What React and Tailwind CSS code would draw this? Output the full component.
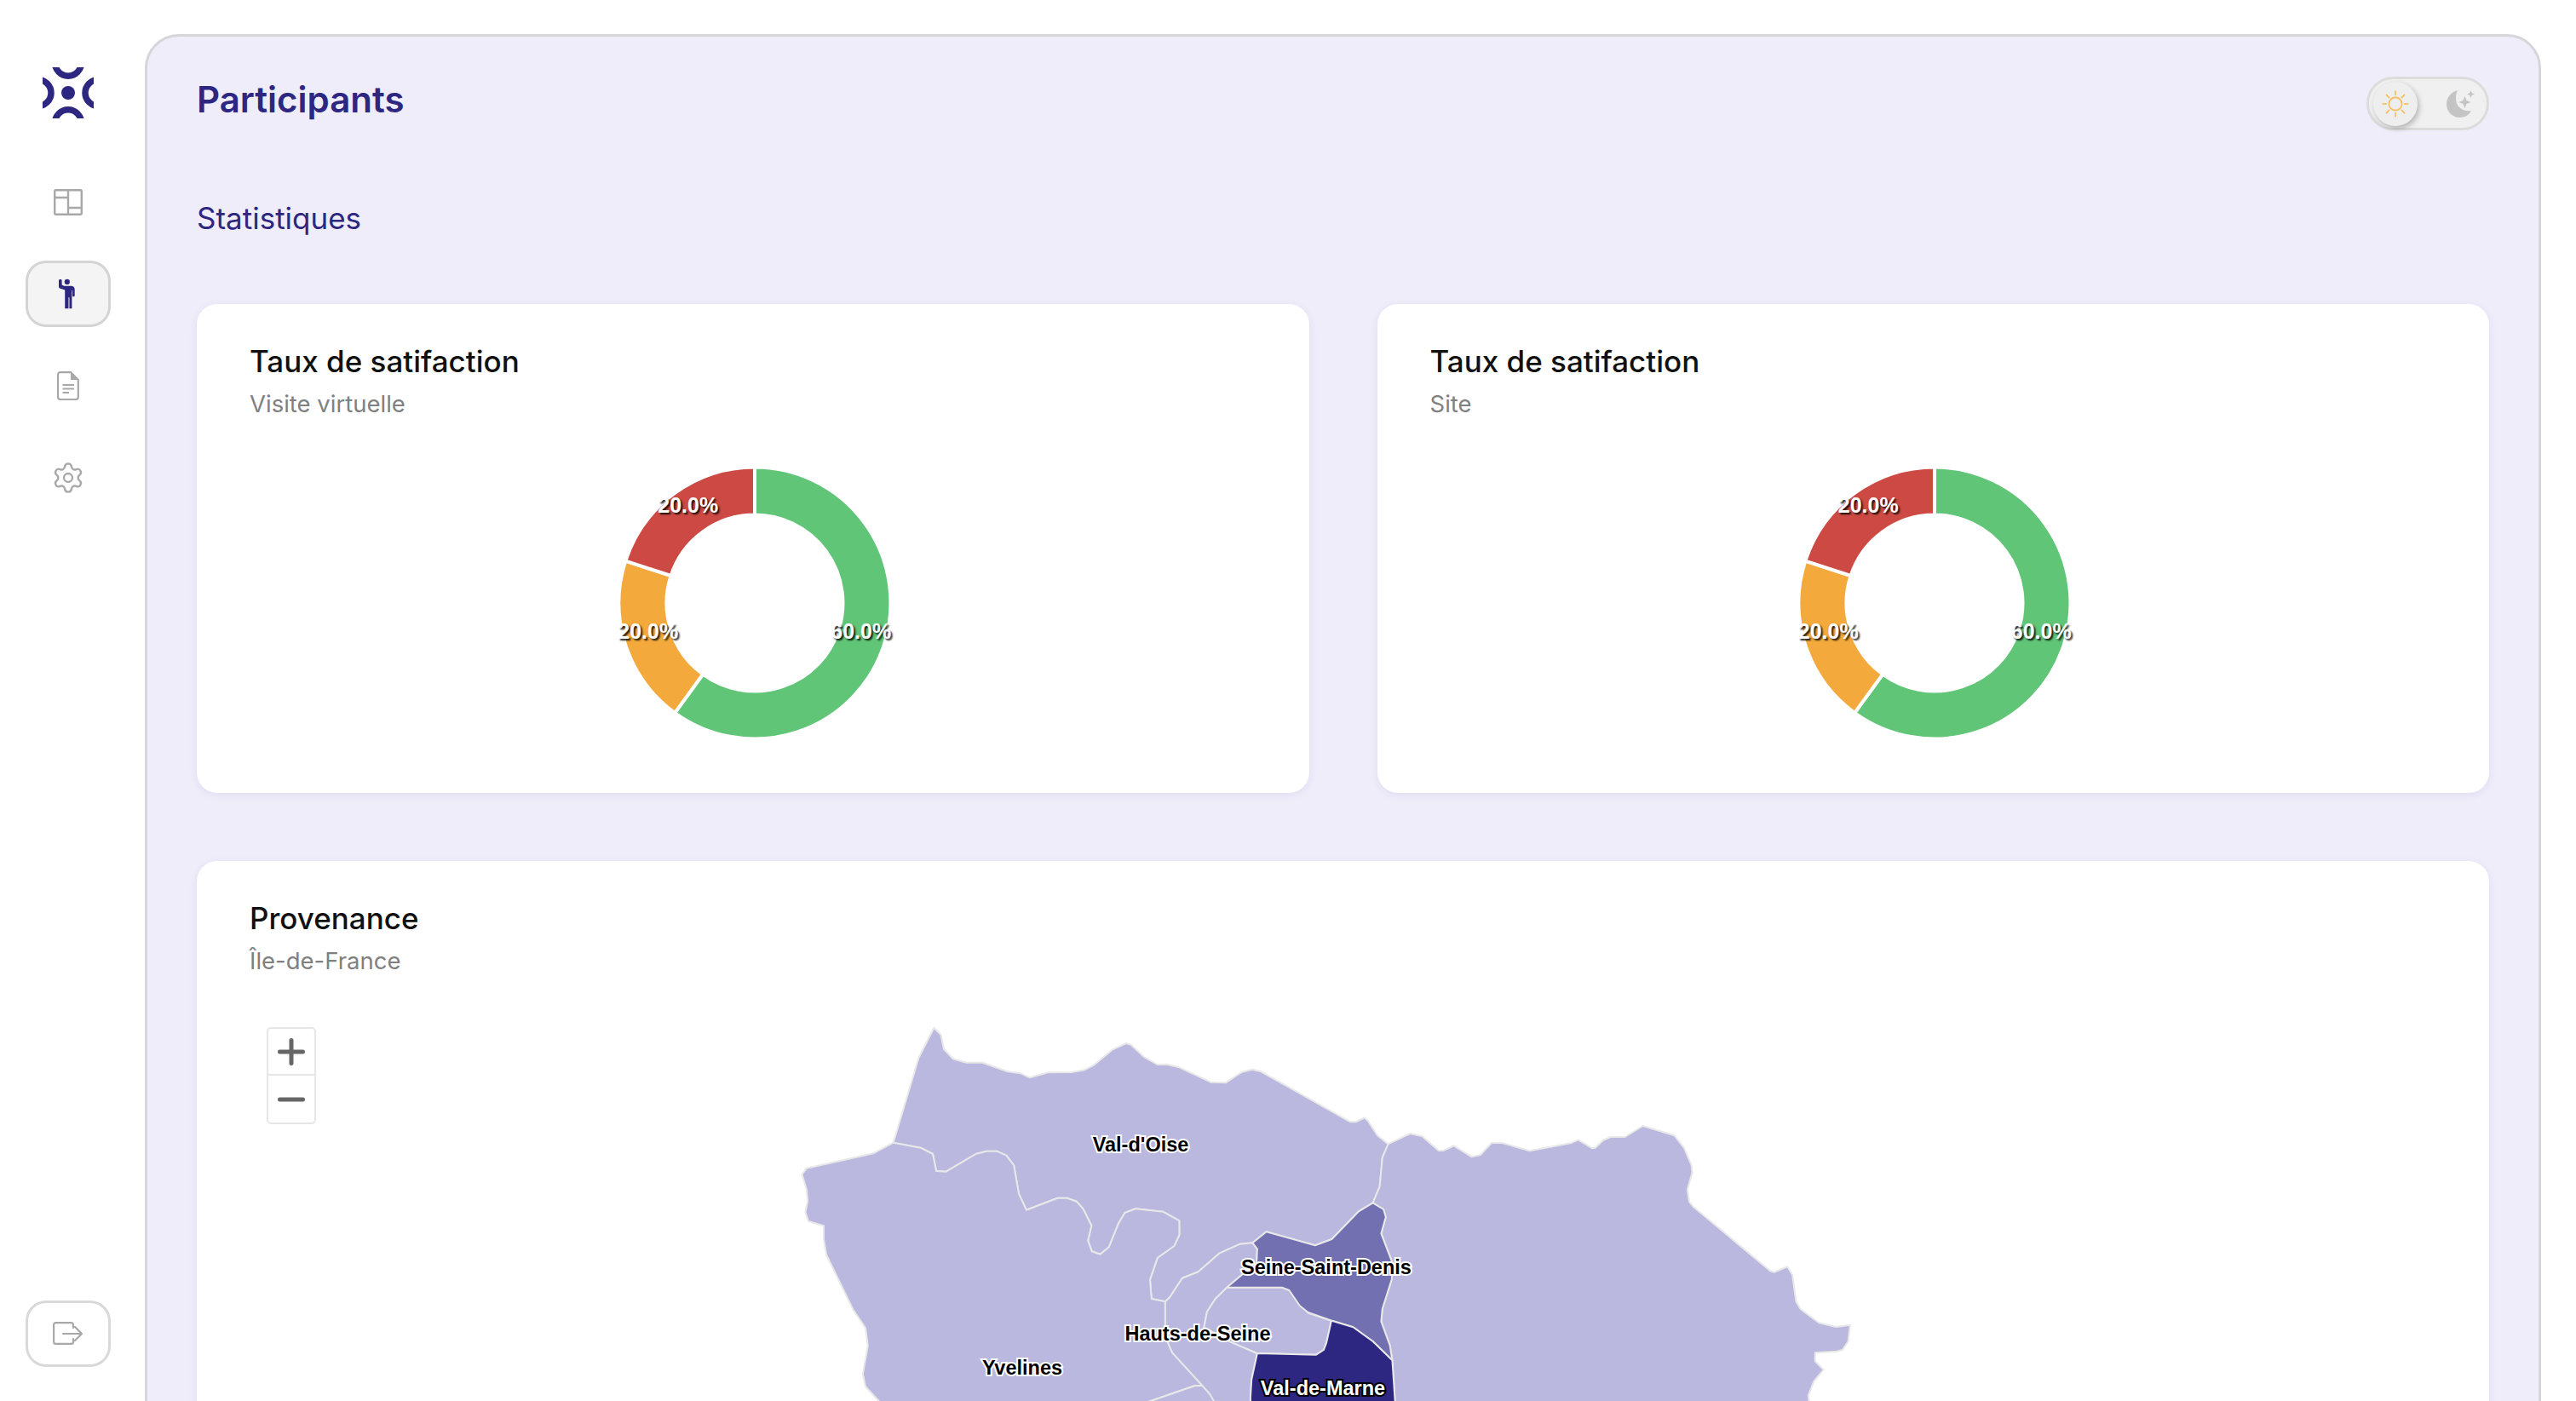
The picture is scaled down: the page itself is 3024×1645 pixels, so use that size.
import React from "react";
import { Settings } from "lucide-react";

const INK = "#2e2782";

// coordonnées relevées sur la carte
const z5 = ([x, y]) => [900 + x / 2.24, 1180 + y / 3];
const z6 = ([x, y]) => [1500 + x / 2.24, 1280 + y / 3];
const pts = (list) => list.map((p) => p.map((n) => n.toFixed(1)).join(",")).join(" ");

const oiseBorder = [
  [1048, 1045], [1012, 1035], [1008, 967], [1028, 890], [1072, 848], [1085, 810], [1085, 760], [1042, 728],
  [970, 718], [942, 732], [925, 770], [900, 853], [877, 878], [855, 868], [845, 830], [854, 777], [832, 718],
  [815, 692], [790, 680], [765, 680], [683, 722], [663, 665], [650, 565], [630, 530], [605, 515], [578, 515],
  [550, 525], [472, 587], [446, 585], [437, 525], [405, 503], [333, 485],
].map(z5);

const valDOise = [
  ...[
    [400, 185], [440, 80], [458, 105], [466, 155], [490, 190], [525, 203], [568, 203], [632, 234], [668, 241],
    [692, 256], [740, 238], [802, 237], [835, 229], [860, 212], [910, 157], [945, 135], [958, 140], [992, 183],
    [1027, 210], [1052, 209], [1085, 220], [1168, 272], [1207, 274], [1250, 236], [1277, 227], [1300, 235], [1535, 412],
  ].map(z5),
  ...[
    [205, 112], [228, 97], [238, 110], [262, 160], [290, 190], [275, 238], [268, 340], [250, 397], [212, 428],
    [142, 525], [98, 547],
  ].map(z6),
  ...[
    [1314, 799], [1278, 838], [1245, 842], [1190, 875], [1135, 940], [1093, 962], [1060, 1030],
  ].map(z5),
  ...oiseBorder,
];

const yvelines = [
  ...oiseBorder,
  ...[
    [280, 523], [105, 575], [93, 597], [105, 650], [108, 690], [102, 730], [110, 762], [150, 778], [150, 825],
    [157, 880], [228, 1075], [260, 1138], [266, 1200], [253, 1300], [260, 1345], [295, 1395], [320, 1420],
    [960, 1420], [1010, 1395], [1125, 1342], [1145, 1340], [1067, 1225], [1055, 1190], [1048, 1140],
  ].map(z5),
];

const essonne = [[960, 1420], [1010, 1395], [1125, 1342], [1145, 1340], [1165, 1370], [1200, 1420]].map(z5);

const hautsDeSeine = [
  [1048, 1045], [1060, 1030], [1093, 962], [1135, 940], [1190, 875], [1245, 842], [1278, 838], [1290, 860],
  [1288, 915], [1250, 950], [1210, 995], [1180, 1035], [1158, 1080], [1150, 1135], [1220, 1187], [1290, 1227],
  [1275, 1320], [1272, 1385], [1275, 1450], [1200, 1450], [1165, 1370], [1145, 1340], [1067, 1225], [1055, 1190],
  [1048, 1140],
].map(z5);

const paris = [
  [1210, 995], [1355, 995], [1375, 1005], [1405, 1060], [1425, 1085], [1485, 1112], [1472, 1190], [1465, 1215],
  [1445, 1232], [1290, 1227], [1220, 1187], [1150, 1135], [1158, 1080], [1180, 1035],
].map(z5);

const seineSaintDenis = [
  ...[[1278, 838], [1314, 799]].map(z5),
  ...[
    [98, 547], [142, 525], [212, 428], [250, 397], [278, 420], [284, 447], [272, 505], [302, 610], [300, 665],
    [275, 770], [272, 815], [295, 900], [301, 952], [250, 885], [198, 835], [142, 812], [80, 783], [58, 760], [30, 705],
  ].map(z6),
  ...[[1355, 995], [1210, 995], [1250, 950], [1288, 915], [1290, 860]].map(z5),
];

const valDeMarne = [
  ...[[1485, 1112], [1472, 1190], [1465, 1215], [1445, 1232], [1290, 1227], [1275, 1320], [1272, 1385], [1275, 1450]].map(z5),
  ...[[310, 1130], [305, 1030], [301, 952], [250, 885], [198, 835], [142, 812]].map(z6),
];

const seineEtMarne = [
  [290, 190], [348, 153], [380, 163], [423, 213], [435, 213], [463, 196], [510, 235], [533, 228], [562, 186],
  [590, 186], [662, 214], [770, 187], [790, 175], [827, 205], [835, 203], [855, 177], [875, 165], [913, 165],
  [960, 126], [1043, 160], [1068, 203], [1088, 265], [1090, 290], [1077, 350], [1082, 393], [1092, 410], [1295, 637],
  [1305, 641], [1340, 622], [1353, 650], [1363, 745], [1375, 772], [1423, 820], [1468, 834], [1505, 827], [1500, 885],
  [1485, 915], [1470, 920], [1413, 925], [1413, 955], [1435, 985], [1410, 1025], [1395, 1075], [1400, 1130],
  [310, 1130], [305, 1030], [301, 952], [295, 900], [272, 815], [275, 770], [300, 665], [302, 610], [272, 505],
  [284, 447], [278, 420], [250, 397], [268, 340], [275, 238],
].map(z6);

const regions = [
  { id: "oise", points: valDOise, fill: "#bab8df" },
  { id: "yvelines", points: yvelines, fill: "#bab8df" },
  { id: "essonne", points: essonne, fill: "#bab8df" },
  { id: "hauts", points: hautsDeSeine, fill: "#bab8df" },
  { id: "paris", points: paris, fill: "#bab8df" },
  { id: "marne", points: seineEtMarne, fill: "#bab8df" },
  { id: "ssd", points: seineSaintDenis, fill: "#7370b1" },
  { id: "vdm", points: valDeMarne, fill: INK },
];

const labels = [
  { text: "Val-d'Oise", x: 1339, y: 1352 },
  { text: "Seine-Saint-Denis", x: 1557, y: 1496 },
  { text: "Hauts-de-Seine", x: 1406, y: 1574 },
  { text: "Yvelines", x: 1200, y: 1614 },
  { text: "Val-de-Marne", x: 1553, y: 1638, light: true },
];

function LogoMark() {
  return (
    <svg viewBox="0 0 60 60" className="block h-[60px] w-[60px]" fill="none" stroke={INK} strokeWidth="7.5">
      <circle cx="30" cy="-5.3" r="15.5" />
      <circle cx="30" cy="65.3" r="15.5" />
      <circle cx="-5.5" cy="30" r="15.5" />
      <circle cx="65.5" cy="30" r="15.5" />
      <circle cx="30" cy="30" r="8" fill={INK} stroke="none" />
    </svg>
  );
}

function LayoutIcon() {
  return (
    <svg viewBox="0 0 34 31" className="h-[31px] w-[34px]" fill="none" stroke="#a8a8a8" strokeWidth="2.4">
      <rect x="1.2" y="1.2" width="31.6" height="28.6" rx="1.5" />
      <path d="M17 1.2V29.8M1.2 10H17M17 22H32.8" />
    </svg>
  );
}

function PersonIcon() {
  return (
    <svg viewBox="58 36 58 108" className="mr-[3px] h-[36px] w-[19px]" fill={INK}>
      <circle cx="88" cy="47" r="9.5" />
      <path d="M58 42c0-5 11-5 11 0v16l8 4h26c6 0 12 5 12 11v25c0 3-8 3-8 0V78h-2v65H96v-40h-3v40H80V76L64 71c-4-1-6-4-6-8z" />
    </svg>
  );
}

function DocIcon() {
  return (
    <svg viewBox="0 0 26 34" className="h-[34px] w-[26px]" fill="none" stroke="#a8a8a8" strokeWidth="2.2">
      <path d="M4 1.2H16L24.8 10V30a3 3 0 0 1-3 3H4a3 3 0 0 1-3-3V4a3 3 0 0 1 3-3z" />
      <path d="M16 1.2L24.8 10H16z" fill="#a8a8a8" stroke="none" />
      <path d="M6.500 16H20M6.500 20.500H20M6.500 25H14" strokeWidth="1.8" />
    </svg>
  );
}

function LogoutIcon() {
  return (
    <svg viewBox="0 0 36 28" className="h-[28px] w-[36px]" fill="none" stroke="#a8a8a8" strokeWidth="2.2" strokeLinecap="round" strokeLinejoin="round">
      <path d="M24 7V3.500a2.400 2.400 0 0 0-2.400-2.400H3.500A2.400 2.400 0 0 0 1.100 3.500v20a2.400 2.400 0 0 0 2.400 2.400h18.100a2.400 2.400 0 0 0 2.400-2.400V20" />
      <path d="M12 14H34M26 6l8 8-8 8" />
    </svg>
  );
}

function SunIcon() {
  return (
    <svg viewBox="0 0 32 32" className="h-[32px] w-[32px]" fill="none" stroke="#f8bb55" strokeWidth="1.6" strokeLinecap="round">
      <circle cx="16" cy="16" r="7.6" />
      <path d="M16 1v4.500M16 26.500V31M1 16h4.500M26.500 16H31M5.400 5.400l3.200 3.200M23.400 23.400l3.200 3.200M5.400 26.600l3.200-3.200M23.400 8.600l3.200-3.200" />
    </svg>
  );
}

function MoonIcon() {
  return (
    <svg viewBox="0 0 34 33" className="h-[33px] w-[34px]" fill="#c4c4c4">
      <path d="M13 1C5.500 3 0 9.500 0 17.500 0 26 7 33 15.500 33c6 0 11-3 13.500-8-8 1.500-16-3-17.500-10.500C10.500 9.500 11 5 13 1z" />
      <path d="M21.500 8l2 5 5 2-5 2-2 5-2-5-5-2 5-2z" />
      <path d="M28.500 1l1.300 3.200 3.200 1.300-3.200 1.300-1.300 3.200-1.300-3.200-3.200-1.300 3.200-1.300z" />
    </svg>
  );
}

// secteur d'anneau, angles en degrés depuis midi
function arcPath(from, to, r1 = 159.5, r2 = 103.5, cx = 202, cy = 200) {
  const pt = (r, a) => {
    const rad = ((a - 90) * Math.PI) / 180;
    return `${(cx + r * Math.cos(rad)).toFixed(2)} ${(cy + r * Math.sin(rad)).toFixed(2)}`;
  };
  const large = to - from > 180 ? 1 : 0;
  return `M${pt(r1, from)}A${r1} ${r1} 0 ${large} 1 ${pt(r1, to)}L${pt(r2, to)}A${r2} ${r2} 0 ${large} 0 ${pt(r2, from)}Z`;
}

function Donut() {
  const label = "absolute -translate-x-1/2 -translate-y-1/2 font-['Liberation_Sans',Arial,sans-serif] text-[25px] leading-none font-bold text-white [text-shadow:2px_2px_2px_rgba(0,0,0,0.85)]";
  return (
    <div className="relative mx-auto mt-[16px] h-[400px] w-[400px]">
      <svg viewBox="0 0 400 400" className="block h-[400px] w-[400px]" stroke="#ffffff" strokeWidth="4">
        <path d={arcPath(0, 216)} fill="#60c577" />
        <path d={arcPath(216, 288)} fill="#f3a93b" />
        <path d={arcPath(288, 360)} fill="#cc4a43" />
      </svg>
      <span className={`${label} left-[327px] top-[233px]`}>60.0%</span>
      <span className={`${label} left-[77px] top-[233px]`}>20.0%</span>
      <span className={`${label} left-[124px] top-[85px]`}>20.0%</span>
    </div>
  );
}

function CardHead({ title, sub }) {
  return (
    <div>
      <h3 className="text-[35px] leading-[46px] font-medium text-[#111111]">{title}</h3>
      <p className="mt-[9px] text-[27.5px] leading-[36px] text-[#808080]">{sub}</p>
    </div>
  );
}

function SatisfactionCard({ sub }) {
  return (
    <div className="h-[574px] rounded-[24px] bg-white px-[62px] pt-[44px] shadow-[0_2px_10px_rgba(46,39,130,0.08)]">
      <CardHead title="Taux de satifaction" sub={sub} />
      <Donut />
    </div>
  );
}

function MapCard() {
  return (
    <div className="relative mt-[80px] rounded-[24px] bg-white pt-[44px] pb-[200px] shadow-[0_2px_10px_rgba(46,39,130,0.08)]">
      <div className="px-[62px]">
        <CardHead title="Provenance" sub="Île-de-France" />
      </div>
      <svg viewBox="231 1180 2691 465" className="mt-[34px] block h-[465px] w-full">
        {regions.map((r) => (
          <polygon key={r.id} points={pts(r.points)} fill={r.fill} stroke="#e8e8e8" strokeWidth="2" strokeLinejoin="round" />
        ))}
        {labels.map((l) => (
          <text
            key={l.text}
            x={l.x}
            y={l.y}
            textAnchor="middle"
            fontSize="23.5"
            fontWeight="700"
            fontFamily="'Liberation Sans', Arial, sans-serif"
            fill={l.light ? "#ffffff" : "#000000"}
            stroke={l.light ? "#000000" : "#ffffff"}
            strokeWidth="4"
            paintOrder="stroke"
          >
            {l.text}
          </text>
        ))}
      </svg>
      <div className="absolute left-[82px] top-[195px] w-[58px] overflow-hidden rounded-[5px] border-2 border-[#e6e6e6] bg-white">
        <div className="flex h-[55px] items-center justify-center border-b-2 border-[#e6e6e6]">
          <svg viewBox="0 0 32 32" className="h-[32px] w-[32px]" stroke="#666666" strokeWidth="5" strokeLinecap="round">
            <path d="M2.500 16H29.500M16 2.500V29.500" />
          </svg>
        </div>
        <div className="flex h-[55px] items-center justify-center">
          <svg viewBox="0 0 32 32" className="h-[32px] w-[32px]" stroke="#666666" strokeWidth="5" strokeLinecap="round">
            <path d="M2.500 16H29.500" />
          </svg>
        </div>
      </div>
    </div>
  );
}

function NavButton({ active, children }) {
  return (
    <button
      className={
        active
          ? "flex h-[78px] w-[100px] items-center justify-center rounded-[24px] border-[3px] border-[#d4d4d4] bg-[#f4f4f4]"
          : "flex h-[78px] w-[100px] items-center justify-center"
      }
    >
      {children}
    </button>
  );
}

export default function App() {
  return (
    <div className="flex h-[1645px] overflow-hidden bg-white font-['Inter',sans-serif]">
      <aside className="flex h-[1645px] w-[160px] shrink-0 flex-col items-center pt-[79px] pb-[40px]">
        <LogoMark />
        <nav className="mt-[59px] flex flex-col gap-[30px]">
          <NavButton><LayoutIcon /></NavButton>
          <NavButton active><PersonIcon /></NavButton>
          <NavButton><DocIcon /></NavButton>
          <NavButton><Settings size={40} strokeWidth={1.4} color="#a8a8a8" /></NavButton>
        </nav>
        <button className="mt-auto flex h-[78px] w-[100px] items-center justify-center rounded-[24px] border-[3px] border-[#d9d9d9]">
          <LogoutIcon />
        </button>
      </aside>

      <main className="mt-[40px] mr-[41px] ml-[10px] h-[1800px] flex-1 rounded-[40px] border-[3px] border-[#d6d6da] bg-[#efedfa] px-[58px] pt-[47px]">
        <header className="flex items-start justify-between">
          <h1 className="text-[42px] leading-[53px] font-semibold text-[#2e2782]">Participants</h1>
          <div className="flex h-[63px] w-[144px] items-center justify-between rounded-full border-[3px] border-[#dcdcdc] bg-[#f0f0f0] pr-[13px] pl-[5px]">
            <span className="flex h-[52px] w-[52px] items-center justify-center rounded-full bg-[#eeeeee] shadow-[2px_3px_6px_rgba(0,0,0,0.25)]">
              <SunIcon />
            </span>
            <MoonIcon />
          </div>
        </header>

        <h2 className="mt-[81px] text-[35px] leading-[44px] text-[#2e2782]">Statistiques</h2>

        <section className="mt-[79px] grid grid-cols-2 gap-[80px]">
          <SatisfactionCard sub="Visite virtuelle" />
          <SatisfactionCard sub="Site" />
        </section>

        <MapCard />
      </main>
    </div>
  );
}
